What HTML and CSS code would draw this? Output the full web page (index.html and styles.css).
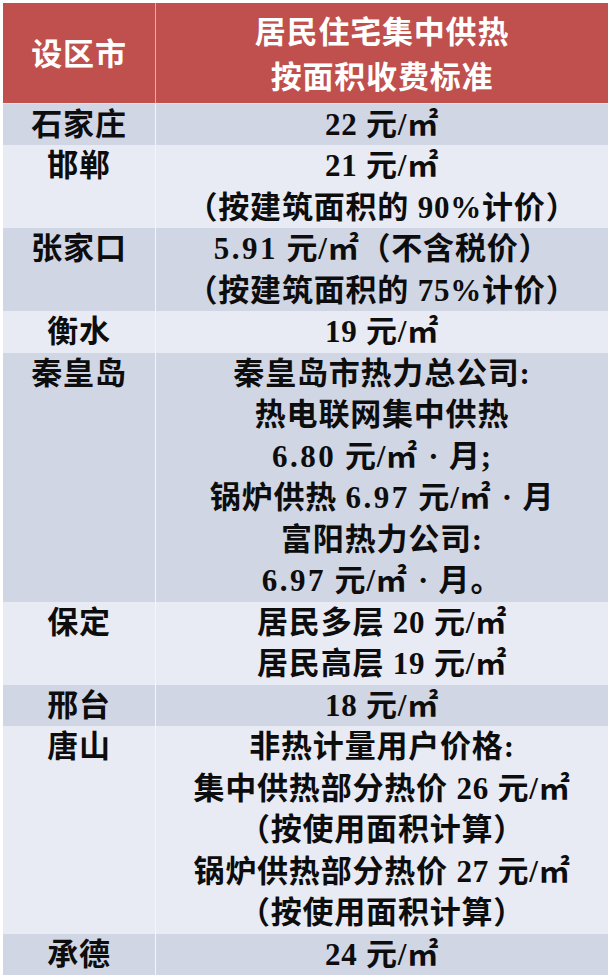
FILE: index.html
```html
<!DOCTYPE html>
<html lang="zh-CN">
<head>
<meta charset="utf-8">
<title>居民住宅集中供热按面积收费标准</title>
<link rel="stylesheet" href="styles.css">
</head>
<body>
<table class="price-table">
  <thead>
    <tr class="head-row">
      <th class="col-city">设区市</th>
      <th class="col-price"><div>居民住宅集中供热</div><div>按面积收费标准</div></th>
    </tr>
  </thead>
  <tbody>
    <tr class="band-dark">
      <td class="col-city">石家庄</td>
      <td class="col-price"><div>22 元/㎡</div></td>
    </tr>
    <tr class="band-light">
      <td class="col-city">邯郸</td>
      <td class="col-price"><div>21 元/㎡</div><div>（按建筑面积的 90%计价）</div></td>
    </tr>
    <tr class="band-dark">
      <td class="col-city">张家口</td>
      <td class="col-price"><div><span class="num">5.91</span> 元/㎡（不含税价）</div><div>（按建筑面积的 75%计价）</div></td>
    </tr>
    <tr class="band-light">
      <td class="col-city">衡水</td>
      <td class="col-price"><div>19 元/㎡</div></td>
    </tr>
    <tr class="band-dark">
      <td class="col-city">秦皇岛</td>
      <td class="col-price">
        <div>秦皇岛市热力总公司:</div>
        <div>热电联网集中供热</div>
        <div><span class="num">6.80</span> 元/㎡<span class="dot">·</span>月;</div>
        <div>锅炉供热 <span class="num">6.97</span> 元/㎡<span class="dot">·</span>月</div>
        <div>富阳热力公司:</div>
        <div><span class="num">6.97</span> 元/㎡<span class="dot">·</span>月。</div>
      </td>
    </tr>
    <tr class="band-light">
      <td class="col-city">保定</td>
      <td class="col-price"><div>居民多层 20 元/㎡</div><div>居民高层 19 元/㎡</div></td>
    </tr>
    <tr class="band-dark">
      <td class="col-city">邢台</td>
      <td class="col-price"><div>18 元/㎡</div></td>
    </tr>
    <tr class="band-light">
      <td class="col-city">唐山</td>
      <td class="col-price">
        <div>非热计量用户价格:</div>
        <div>集中供热部分热价 26 元/㎡</div>
        <div>（按使用面积计算）</div>
        <div>锅炉供热部分热价 27 元/㎡</div>
        <div>（按使用面积计算）</div>
      </td>
    </tr>
    <tr class="band-dark">
      <td class="col-city">承德</td>
      <td class="col-price"><div>24 元/㎡</div></td>
    </tr>
  </tbody>
</table>
</body>
</html>
```

FILE: styles.css
```css
html, body {
  background: #ffffff;
}

body {
  margin: 3px;
  font-family: "Liberation Serif", "Noto Sans CJK SC", serif;
  font-weight: 700;
  font-size: 31px;
  color: #0d0d0d;
}

.price-table {
  border-collapse: collapse;
  border-spacing: 0;
  width: 605px;
  table-layout: fixed;
}

.price-table th,
.price-table td {
  padding: 0;
  text-align: center;
  white-space: nowrap;
  letter-spacing: 0.8px;
}

.col-city {
  width: 152px;
  border-right: 1px solid #f3f5f9;
}

.head-row {
  background: #c0504d;
  color: #ffffff;
  height: 100px;
}

.head-row th {
  vertical-align: middle;
  line-height: 45px;
  font-weight: 700;
  padding-top: 4px;
  border-bottom: 1px solid #f2dede;
}

.head-row .col-city {
  border-right: 1px solid #e9a9a7;
}

tbody td {
  vertical-align: top;
  line-height: 41.5px;
}

.num {
  letter-spacing: 2.5px;
}

.dot {
  display: inline-block;
  width: 31px;
  text-align: center;
  letter-spacing: 0;
}

.band-dark {
  background: #d0d6e4;
}

.band-light {
  background: #e8ebf3;
}
```
